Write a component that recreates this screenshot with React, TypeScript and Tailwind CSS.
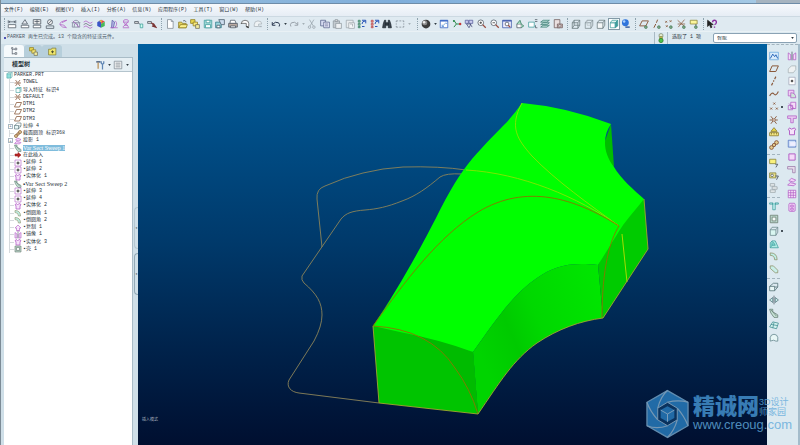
import React from "react";

/* A stroke of an icon on a 16-unit grid: path, stroke colour, fill colour, stroke width. */
type Shape = [d: string, stroke?: string, fill?: string, width?: number];

const INK = "#4c5561";
const TEAL = "#3f9c9c";
const PLUM = "#b05cc4";
const BROWN = "#8a5a3c";
const GOLD = "#e8d84e";

const dot = (x: number, y: number, r: number) =>
  `M${x - r} ${y}a${r} ${r} 0 1 0 ${2 * r} 0a${r} ${r} 0 1 0 ${-2 * r} 0`;

const cube = (line: string, face: string): Shape[] => [
  ["M2 6h9v9h-9z", line, face],
  ["M2 6l3-4h9l-3 4M14 2v8l-3 5", line, "none"],
];

const eye: Shape[] = [[dot(11, 13, 2.2), "#3d6b4c", "#7fae8a", 1]];

const icons: Record<string, Shape[]> = {
  distance: [["M2 2v5M14 2v5M3 4.500h10M5 3l-2 1.500l2 1.500M11 3l2 1.500l-2 1.500", INK], ["M2 9h12v5h-12z", INK, "#fff"]],
  angle: [["M8 1l-5 7h9z", INK, "#e4e8ee"], ["M2 10h12v4h-12z", INK, "#fff"]],
  area: [["M2 1h12v7h-12z", INK, "#eee"], ["M8 1v7M4 4h8", INK], ["M2 10h12v4h-12z", INK, "#fff"]],
  diameter: [[dot(8, 5, 4), INK, "#eee"], ["M5 8l6-6M2 11h12v4h-12z", INK]],
  curvature: [["M14 2q-12 2-11 7M14 2l-8 4M14 14q-8 0-11-5M12 13q-1-4-9-4", PLUM]],
  section: [["M2 13q0-11 6-11q6 0 6 11M5 13q0-7 3-7q3 0 3 7M2 13h12M1 6h14", "#7d7f9b"], ["M3 3l10 10", PLUM]],
  waves: [["M1 5q4-4 7 0t7 0", PLUM], ["M1 9q4-4 7 0t7 0", "#667"], ["M1 13q4-4 7 0t7 0", PLUM]],
  shade: [["M2 5l6-4v13l-6-3z", "none", "#3a55c8"], ["M8 1l6 3l-6 4z", "none", "#e0484a"], ["M8 8l6-4v7l-6 3z", "none", "#48b858"], ["M5 3l4-2v5z", "none", "#f0c83c"]],
  draft: [["M4 14l1-12l4 3l-2 9z", "#5a5ca8", "#b5b4e6"], ["M10 3q5 5-1 11M2 14h12", PLUM]],
  compare: [["M4 3q0-2 4-2t4 2t-4 5t-5 5M12 13q-1-3-5-5t-3-5M3 14h10M4 5h8M5 10h6", PLUM]],
  sensor: [["M1 4h6v3h-6zM7 6l4 4", INK, "#ddd"], ["M10 8h4v6h-4z", TEAL, "#cfe"]],
  probe: [["M1 4h6v3h-6z", INK, "#ddd"], ["M7 6l7 7M10 7l4 6l-6-2", "#7a3434", "none", 2]],
  newFile: [["M4 1h6l3 3v11h-9z", "#7d8791", "#fff"], ["M10 1v3h3", "#7d8791"]],
  open: [["M1 5h5l1 2h6v7h-12z", "#8a7a20", "#e6d25a"], ["M1 14l3-5h11l-2 5z", "#8a7a20", "#fbf08a"], ["M8 3q4-2 5 2", INK]],
  folders: [["M1 1h7v6h-7z", "#8c7b1e", GOLD], ["M5 5h7v6h-7z", "#8c7b1e", "#f7e878"], ["M9 9h6v6h-6z", "#6b6b55", "#f3ec9c"]],
  save: [["M2 2h12v12h-12z", TEAL, "#a6dcdc"], ["M5 2h6v4h-6zM4 9h8v5h-8z", TEAL, "#fff"]],
  saveCopy: [["M1 5h9v9h-9z", "#2c7a88", "#9ad4dc"], ["M6 1h9v8h-5z", "#456", "#cde"], ["M3 10h5v4h-5z", "#456", "#fff"]],
  print: [["M4 2h7l2 5h-10z", INK, "#fff"], ["M1 7h14v6h-14z", INK, "#b9a9a0"], ["M4 11h8v3h-8z", INK, "#eee"]],
  mail: [["M2 8q0-6 6-6t6 5v5h-4v-5h-8z", "#555", "#fff"], ["M10 12l4 2", "#333", "none", 2]],
  link: [["M2 9q0-6 6-6t6 5h-5v4h-7z", "#a9b3ba", "#eef2f4"], ["M10 12h4", "#a9b3ba", "none", 2]],
  undo: [["M2 5v5h5M2 9q5-6 10-3q3 3 1 6", "#2b3850", "none", 1.6]],
  redo: [["M14 5v5h-5M14 9q-5-6-10-3q-3 3-1 6", "#9aa3ab", "none", 1.6]],
  cut: [["M4 1l6 10M11 1l-6 10", "#97a1aa"], [dot(4, 13, 2), "#97a1aa"], [dot(11, 13, 2), "#97a1aa"]],
  copy: [["M1 2h8v9h-8z", "#55608a", "#d4daf0"], ["M6 5h9v9h-9z", "#55608a", "#eef"], ["M8 8h5M8 11h5", "#55608a"]],
  paste: [["M2 3h10v11h-10z", "#8e979e", "#c3cacf"], ["M6 7h9v8h-9z", "#8e979e", "#eef1f3"], ["M5 1h4v3h-4z", "#8e979e", "#ddd"]],
  pasteSpecial: [["M2 2h11v12h-11z", "#9ea6ac", "#e8ecee"], ["M6 6h9v9h-9zM8 8h4v4", "#9ea6ac", "#f5f7f8"]],
  regen: [["M2 2h3v3h-3zM2 7h3v3h-3zM2 12h3v2h-3z", "#347a5c", "#8ec9ac"], ["M8 2h6v5M14 3q-6 0-6 5M8 12h4", "#2d58b8", "none", 1.6]],
  regenAll: [["M2 2h3v3h-3zM2 7h3v3h-3zM2 12h3v2h-3z", "#b84848", "#ee9a9a"], ["M8 2h6v5M14 3q-6 0-6 5M8 12h4", "#2d58b8", "none", 1.6]],
  find: [["M2 8l2-6h2v12h-5zM14 8l-2-6h-2v12h5zM6 6h4v4h-4z", "#222b33", "#39434c"]],
  select: [["M2 3h3M7 3h3M12 3h2v2M14 7v2M14 11v2h-2M10 13h-3M5 13h-3v-2M2 9v-2M2 5v-2", "#7d8891"]],
  sphere: [[dot(8, 8, 7), "none", "#3c3c3c"], [dot(6, 6, 4), "none", "#8c8c8c"], [dot(5, 5, 2), "none", "#eee"]],
  repaint: [["M2 2h12v12h-12z", "#2b5cc0", "#fff"], ["M2 3h12", "#2b5cc0", "none", 2], ["M5 12l6-6l2 2M5 9v3h3", "#4a8ad0"]],
  spin: [["M3 2l4 6l-4 5M7 8h7", "#2c8a4c", "none", 1.6], [dot(13, 8, 2), "none", "#c43838"], [dot(3, 3, 1.6), "none", "#2c8a4c"]],
  layers: [["M2 2h5v5h-5zM8 2h6v5h-6z", "#5a5f9c", "#c9cbee"], ["M4 8h7l-3 6zM10 8l3 5", "#444a7a"]],
  zoomIn: [[dot(6, 6, 4.5), INK, "#fff"], ["M4 6h4M6 4v4", "#333"], ["M9 9l5 5", "#9a4a3c", "none", 2]],
  zoomOut: [[dot(6, 6, 4.5), INK, "#fff"], ["M4 6h4", "#333"], ["M9 9l5 5", "#9a4a3c", "none", 2]],
  fit: [["M1 2h14v12h-14z", "#3a55a8", "#eef"], ["M1 3h14", "#3a55a8", "none", 2], [dot(8, 8, 3), INK, "#fff"], ["M10 10l3 3", "#9a4a3c", "none", 2]],
  orient: [["M3 8h7v6h-7z", INK, "#fff"], ["M3 8l5-6l2 6M10 8l4 3l-4 3", "#2f7a5c", "#a8d8c0"]],
  views: [["M1 5h9v8h-9z", TEAL, "#fff"], ["M11 1h4M11 4h4M12 10v4h3", INK]],
  layerTree: [["M1 5l4-3h10l-4 3zM1 9l4-3h10l-4 3zM1 13l4-3h10l-4 3z", "#3c7c74", "#bfe3dd"]],
  viewManager: [["M2 1h9v13h-9z", "#6e5a5a", "#eadfdf"], ["M7 8h8v6h-8z", "#6e5a5a", "#d9c4c4"], [dot(11, 11, 2), "#6e5a5a", "#fff"]],
  wireframe: [...cube("#66757a", "none"), ["M5 2v8h9M5 10l-3 5", "#66757a"]],
  hidden: [...cube("#7d8b90", "none"), ["M5 3v7h8", "#b8c2c5"]],
  noHidden: cube("#66757a", "#f4f7f8"),
  shaded: [["M2 6h8v8h-8z", TEAL, "#fff"], ["M2 6l3-4h9l-4 4z", TEAL, "#dff4f0"], ["M14 2v9l-4 3v-8z", TEAL, "#3f9c9c"]],
  blueBall: [[dot(7, 6, 5.5), "none", "#2f74dc"], [dot(5, 4, 2), "none", "#a8d0ff"], ["M7 13h7", "#3c60a0", "none", 2.4]],
  plane: [["M5 3h10l-4 9h-10z", BROWN, "none", 1.6]],
  planeEye: [["M5 3h10l-4 8h-10z", BROWN, "none", 1.5], ...eye],
  axisEye: [["M9 1l-2 5M6 8l-3 6", BROWN, "none", 1.6], ...eye],
  pointEye: [["M2 3l3 3m0-3l-3 3M9 2l3 3m0-3l-3 3M3 10l3 3m0-3l-3 3", BROWN], ...eye],
  csysEye: [["M1 2l11 10M12 1l-10 12M1 8h12", BROWN], ...eye],
  noteEye: [["M2 2h11v6h-11z", "#8b8430", "#fbf59c"], ["M11 8v3", INK], ...eye],
  help: [["M1 2v10l3-3l2 5l2-1l-2-4h4z", "#222", "#222"], ["M9 5q0-3 3-3t3 3t-3 4M12 12v2", "#8a2fa0", "none", 2.2]],
  light: [["M5 3q0-2 3-2t3 2v3h-6z", "#7a8a70", "#e6ecd0"], ["M6 6h4v4h-4z", "#8c8c40", "#d8c850"], [dot(8, 12, 3.4), "#2d7a2d", "#4cc04c"]],
  sketch: [["M1 2h14v12h-14z", "#6aa6dc", "#d9ecfb"], ["M2 12l4-7l3 4l2-3l3 6", "#2a66b8", "none", 1.6]],
  axis: [["M11 1l-2 4M8 7l-1 2M6 11l-2 4", BROWN, "none", 1.8]],
  curve: [["M1 11q4-7 7-3t7-4", BROWN, "none", 1.8]],
  points: [["M7 1l3 3m0-3l-3 3M2 9l3 3m0-3l-3 3M11 9l3 3m0-3l-3 3", BROWN, "none", 1.5]],
  csys: [["M1 8h13M3 2l9 12M12 2l-9 12", BROWN, "none", 1.5], [dot(8, 8, 2), BROWN, "#fff"]],
  analysis: [["M8 1l5 6h-10z", "#857320", GOLD], ["M1 9h14v5h-14zM4 9v3M8 9v3M12 9v3", "#857320", "#f5eb8b"]],
  chain: [[dot(12, 4, 3), BROWN, "#e5cf90", 1.5], [dot(8, 8, 2.6), BROWN, "#e5cf90", 1.5], [dot(4, 12, 3), BROWN, "#e5cf90", 1.5]],
  note: [["M1 2h10v7h-10z", "#847f31", "#f9f17d"], ["M10 10h4l-3 5", INK, "none", 1.4]],
  noteSet: [["M1 3h10v8h-10z", "#847f31", "#e9df8b"], [dot(5, 7, 2), INK, "#fff"], ["M10 8h5l-3 6", INK, "none", 1.4]],
  noteOff: [["M2 1h7v4h-7zM5 6h8v4h-8zM2 11h8v4h-8z", "#9aa4a8", "#e5eaec"]],
  hole: [["M1 3h5v3M15 3h-5v3M6 3v11h4v-11M1 3v2h5M15 3v2h-5", TEAL, "#bfeeee"]],
  shell: [["M2 2h12v12h-12z", "#68796e", "#b9d6cb"], ["M5 5h6v6h-6z", "#68796e", "#f4faf8"]],
  rib: cube("#68858a", "#d9f6f1"),
  draftFace: [["M2 14v-8l3-3h5l5 11z", TEAL, "#b0ece6"], ["M5 3v7l-3 4M5 10h5l-3-5", TEAL, "#7fd6d0"]],
  round: [["M2 3q11 0 11 11h-4q0-7-7-7z", "#8b8f66", "#bfeee4"]],
  chamfer: [["M2 3h5l7 7v4h-4l-8-7z", "#8b8f66", "#c8eee8"]],
  extrude: [["M1 7h8v7h-8z", "#4d6c72", "#e8f6f6"], ["M7 2h7v6h-5M1 7l6-5M9 14l5-6", "#4d6c72"]],
  revolve: [["M8 1v14", INK], ["M6 4l-5 4l5 4zM10 4l5 4l-5 4z", "#507279", "#c9ece9"]],
  sweep: [["M1 2h5v4l8 5v4h-6l-5-7z", "#607a70", "#c7e3d6"], ["M3 3l9 10", "#607a70"]],
  blend: [["M1 11l5-8l9 2l-3 9zM3 7l11 2M8 4l-2 9", "#3f8c90", "#d4f2ef"]],
  style: [["M2 13v-6q1-5 6-5t6 5v6h-3q-3-3-9 0z", "#5e8088", "#e8f7f6"]],
  mirror: [["M2 3v11h4v-8zM14 3v11h-4v-8z", PLUM, "#f3dcf7"], ["M8 1v14", INK]],
  merge: [["M2 8l5-5h7v6l-4 5h-8z", "#a5b0b4", "#eef1f2"]],
  extend: [["M3 2h10v12h-10z", "#a0a6b8", "#fff"], ["M8 6v4M6 8h4", "#222", "none", 1.6]],
  extendTree: [["M2 2h12v12h-12z", PLUM, "#fff"], ["M8 5v6M5 8h6", "#222", "none", 1.8]],
  trim: [["M2 2h9v9h-9z", PLUM, "#efcff5"], ["M6 6q8 0 8 8h-8z", PLUM, "#cfe6d8"]],
  offset: [["M6 2h8v10h-8z", PLUM, "#f4dcf8"], ["M2 7h7v7h-7zM3 4l9 9", PLUM]],
  thicken: [["M1 3h14v4h-5v7h-4v-7h-5z", PLUM, "#e9c9f2"]],
  solidify: [["M2 6l2-3l3 2l5-2l2 3l-2 1v7h-8v-7z", PLUM, "#f6e3fa", 1.5]],
  fill: [["M2 2h12v11h-12z", "#4f72c0", "#cfdff8"], ["M5 5h9v6h-9z", "none", "#eef"]],
  pattern: [["M3 3h10v10h-10z", PLUM, "#f4d9f8", 1.5]],
  corner: [["M1 4h12v10h-4v-6h-8z", "#9b7aa8", "#e6dbea"]],
  project: [["M3 6l4-4l7 3l-4 3zM1 13l4-4l9 2l-3 3z", PLUM, "#f3d3f8"]],
  table: [["M2 2h12v12h-12zM2 6h12M2 10h12M6 2v12M10 2v12", PLUM, "#fae9fc"]],
  copySurface: [["M4 2h8l1 2v10l-2 1h-6l-2-1v-10z", PLUM, "#f3d3f8"], ["M6 5h4v3h-4zM6 10h4v3h-4z", PLUM]],
  duplicate: [["M2 8l6-6l6 6h-3v5h-6v-5zM5 14h7", PLUM, "#f8e6fb"]],
  part: [["M2 4h9v10h-9z", TEAL, "#8fe0dc"], ["M2 4l3-3h9v9l-3 4M11 4l3-3", TEAL, "none"]],
  importPart: [["M4 5h8v8h-8z", TEAL, "#f4fcfb"], ["M4 5l2-2h8v8l-2 2M12 5l2-2", TEAL, "none"]],
  insert: [["M2 6h6v-3l6 5l-6 5v-3h-6z", "#9c1f1f", "#b52424"]],
  tree: [["M4 1v12M4 4h5M4 12h5", INK], [dot(4, 2, 1.4), INK, "#fff"], ["M9 2h3v3h-3zM9 10h3v3h-3z", INK, "#fff"]],
  favorites: [["M1 4h5l1-2h7v12h-13z", "#7d762b", "#efe66d"], ["M8 6v5M5.500 8.500h5", "#4f5130", "none", 1.8]],
  tools: [["M2 3h7", "#4b6180", "none", 2.4], ["M5 4v10", "#b99058", "none", 2], ["M10 2v3l2 2l2-2v-3M12 7v8", "#5f86b4", "none", 2]],
  list: [["M2 2h12v12h-12z", "#7b8790", "#fff"], ["M4 5h8M4 8h8M4 11h8", "#65707a"]],
};

function Icon({ name, className = "size-[10px]" }: { name: string; className?: string }) {
  return (
    <svg viewBox="0 0 16 16" className={`${className} shrink-0`} aria-hidden="true">
      {icons[name].map(([d, stroke = "none", fill = "none", width = 1.2], i) => (
        <path key={i} d={d} stroke={stroke} fill={fill} strokeWidth={width} />
      ))}
    </svg>
  );
}

function Tool({ name, active = false }: { name: string; active?: boolean }) {
  return (
    <button
      type="button"
      aria-label={name}
      className={`flex size-[10px] shrink-0 items-center justify-center ${active ? "bg-white outline outline-1 outline-[#8299a6]" : ""}`}
    >
      <Icon name={name} />
    </button>
  );
}

function Caret({ faded = false }: { faded?: boolean }) {
  return (
    <span className="flex w-2 shrink-0 justify-center">
      <svg viewBox="0 0 4 3" className="h-[2px] w-[3px]" aria-hidden="true">
        <path d="M0 0h4l-2 3z" fill={faded ? "#a4afb6" : "#2f3a42"} />
      </svg>
    </span>
  );
}

function Grip() {
  return (
    <span className="flex h-full w-2 shrink-0 justify-center py-px">
      <span className="border-l border-dotted border-[#8ea2ad]" />
    </span>
  );
}

function ToolGroup({ names, width, active }: { names: string[]; width: string; active?: string }) {
  return (
    <div className={`flex shrink-0 justify-between ${width}`}>
      {names.map((n) => (
        <Tool key={n} name={n} active={n === active} />
      ))}
    </div>
  );
}

function ToolColumn({ names, height }: { names: string[]; height: string }) {
  return (
    <div className={`flex flex-col items-center justify-between ${height}`}>
      {names.map((n) =>
        n === "points" || n === "rib" ? (
          <div key={n} className="relative flex">
            <Tool name={n} />
            <span className="absolute top-1 left-3 size-[2px] bg-[#46525b]" />
          </div>
        ) : (
          <Tool key={n} name={n} />
        ),
      )}
    </div>
  );
}

function Divider() {
  return (
    <div className="flex h-2 items-center">
      <span className="w-full border-t border-dashed border-[#a3b4be]" />
    </div>
  );
}

const menus = ["文件(F)", "编辑(E)", "视图(V)", "插入(I)", "分析(A)", "信息(N)", "应用程序(P)", "工具(T)", "窗口(W)", "帮助(H)"];

const treeRows: { icon: string; label: string; expandable?: boolean; selected?: boolean; serif?: boolean }[] = [
  { icon: "csys", label: "TOWEL" },
  { icon: "importPart", label: "导入特征 标识4" },
  { icon: "csys", label: "DEFAULT" },
  { icon: "plane", label: "DTM1" },
  { icon: "plane", label: "DTM2" },
  { icon: "plane", label: "DTM3" },
  { icon: "extrude", label: "拉伸 4", expandable: true },
  { icon: "chain", label: "截面圆顶 标识368" },
  { icon: "project", label: "投影 1", expandable: true },
  { icon: "sweep", label: "Var Sect Sweep 1", selected: true, serif: true },
  { icon: "insert", label: "在此插入" },
  { icon: "extendTree", label: "▪延伸 1" },
  { icon: "extendTree", label: "▪延伸 2" },
  { icon: "solidify", label: "▪实体化 1" },
  { icon: "sweep", label: "▪Var Sect Sweep 2", serif: true },
  { icon: "extendTree", label: "▪延伸 3" },
  { icon: "extendTree", label: "▪延伸 4" },
  { icon: "solidify", label: "▪实体化 2" },
  { icon: "round", label: "▪倒圆角 1" },
  { icon: "round", label: "▪倒圆角 2" },
  { icon: "duplicate", label: "▪复制 1" },
  { icon: "mirror", label: "▪镜像 1" },
  { icon: "solidify", label: "▪实体化 3" },
  { icon: "shell", label: "▪壳 1" },
];

function ModelTree() {
  return (
    <ul className="grid h-[181px] auto-rows-fr">
      <li className="flex min-h-0 items-center gap-px pl-[2px] leading-none">
        <Icon name="part" className="size-[7px]" />
        PARKER.PRT
      </li>
      {treeRows.map((row, i) => (
        <li key={i} className="flex min-h-0 items-center pl-[2px] leading-none">
          <span className="flex h-full w-2 shrink-0 items-center justify-end">
            {row.expandable ? (
              <span className="mr-px flex size-[5px] items-center justify-center border border-[#a9b8c2] bg-white text-[4px] leading-none">+</span>
            ) : (
              <span className="flex h-full w-[5px] items-center border-l border-[#d6dadd]">
                <span className="w-full border-t border-[#d6dadd]" />
              </span>
            )}
          </span>
          <Icon name={row.icon} className="size-[8px]" />
          <span
            className={`ml-px whitespace-nowrap ${row.serif ? "font-['Liberation_Serif','Noto_Sans_CJK_SC',serif] text-[6px]" : ""} ${row.selected ? "bg-[#7fbcdc] text-white" : ""}`}
          >
            {row.label}
          </span>
        </li>
      ))}
    </ul>
  );
}

function SidePanel() {
  return (
    <aside className="flex w-[137px] shrink-0 bg-[#cfdfe8]">
      <div className="flex w-[132px] flex-col pt-px pl-[3px]">
        <div className="flex h-3 shrink-0 items-center">
          <button type="button" aria-label="模型树" className="flex h-full w-[20px] items-center justify-center rounded-t-[3px] bg-[#f6fafc]">
            <Icon name="tree" className="size-[9px]" />
          </button>
          <button type="button" aria-label="文件夹浏览器" className="flex h-full w-[18px] items-center justify-center rounded-t-[3px] bg-[#b7cfdb]">
            <Icon name="folders" className="size-[9px]" />
          </button>
          <button type="button" aria-label="收藏夹" className="flex h-full w-[20px] items-center justify-center rounded-t-[3px] bg-[#b7cfdb]">
            <Icon name="favorites" className="size-[9px]" />
          </button>
        </div>
        <div className="flex min-h-0 flex-1 flex-col border-t border-r border-[#a9bcc7] bg-[#e6eff4]">
          <header className="flex h-[13px] shrink-0 items-center pr-px pl-2">
            <h2 className="flex-1 text-[6px] leading-none font-bold">模型树</h2>
            <Tool name="tools" />
            <Caret />
            <Tool name="list" />
            <Caret />
          </header>
          <div className="min-h-0 flex-1 overflow-hidden border-t border-[#b4c4cd] bg-white">
            <ModelTree />
          </div>
        </div>
      </div>
      <div className="flex flex-1 flex-col gap-1 pt-[163px] pl-px">
        <span className="flex h-[42px] items-center rounded-l-sm border border-r-0 border-[#b4c7d1] text-[4px]">◂</span>
        <span className="flex h-[42px] items-center rounded-l-sm border border-r-0 border-[#93aab7] text-[4px]">◂</span>
      </div>
    </aside>
  );
}

function Model() {
  return (
    <svg viewBox="138 44 629 401" className="h-full w-full" role="img" aria-label="PARKER">
      <defs>
        <linearGradient id="side" x1="0" x2="1" y1="0.500" y2="0">
          <stop offset="0" stopColor="#00d400" />
          <stop offset="0.250" stopColor="#00ca00" />
          <stop offset="0.450" stopColor="#00d800" />
          <stop offset="1" stopColor="#00e800" />
        </linearGradient>
      </defs>
      <g fill="none" stroke="#8b8359" strokeWidth="0.9">
        <path d="M322 247L317 199Q316 189 325 186Q345 177 363 173Q383 168 403 167Q440 166 466 170" />
        <path d="M462 174Q446 173 440 177C427 188 416 196 402 201C387 207 377 209 365 210C352 211 346 213 341 219L302 276Q301 280 304 283C317 294 322 303 322 315Q322 326 314 341L289 380C286 387 291 392 299 393L379 403" />
      </g>
      <path d="M611 124L614 167L600 155Z" fill="#00bd00" />
      <path d="M644 199L648 249L603 318L598 265L622 215Z" fill="#00cb00" />
      <path d="M373 326L379 403L478 414L473 352L427 330Z" fill="#00c400" />
      <path d="M373 326Q430 329 455 368Q470 388 478 414L473 352L430 336Z" fill="#00bb00" />
      <path d="M473 352C496 320 512 295 537 278C554 266 570 262 598 265L603 318C580 321 558 329 537 343C513 360 500 382 478 414Z" fill="url(#side)" />
      <path d="M522 103Q567 107 611 124C603 135 602 152 614 167C621 179 634 190 644 199C633 213 625 221 618 233L598 265C570 262 554 266 537 278C512 295 496 320 473 352Q441 340 400 332L373 326C397 291 420 249 436 218C449 191 461 172 472 159C485 144 498 131 507 122Q515 113 522 103Z" fill="#00ff00" />
      <g fill="none" strokeWidth="0.9">
        <path d="M522 103C509 127 517 139 532 156C555 180 590 205 619 226" stroke="#86e500" />
        <path d="M466 170C521 173 578 197 619 226" stroke="#86e500" />
        <path d="M373 326C405 281 439 236 478 212C526 183 575 198 619 226C610 240 602 268 602 318" stroke="#8b7300" />
        <path d="M373 326Q430 329 455 368Q470 388 478 414" stroke="#8b7600" />
        <path d="M622 234L627 282" stroke="#b8de00" />
        <path d="M373 326L379 403L478 414C500 382 513 360 537 343C558 329 580 321 603 318L648 249L644 199" stroke="#a1a52f" />
      </g>
    </svg>
  );
}

function Watermark() {
  return (
    <div className="pointer-events-none absolute right-2 bottom-[6px] flex items-center gap-1 font-['Liberation_Sans','Noto_Sans_CJK_SC',sans-serif] text-[#62abdc] opacity-80">
      <svg viewBox="0 0 44 50" className="h-[50px] w-[43px]" aria-hidden="true">
        <path d="M22 1L43 13V37L22 49L1 37V13Z" fill="#2a80c2" stroke="#79a9cc" strokeWidth="1.4" />
        <path d="M22 13L32 19V31L22 37L12 31V19Z" fill="#0d3a68" stroke="#93b8d3" />
        <path d="M22 17L29 21V29L22 33L15 29V21Z" fill="#2a80c2" />
        <path d="M15 21L22 25L29 21M22 25V33" fill="none" stroke="#9cc2dc" />
        <path d="M22 13Q33 10 43 13M32 19Q39 27 43 37M32 31Q29 42 22 49M22 37Q11 41 1 37M12 31Q4 22 1 13M12 19Q15 7 22 1" fill="none" stroke="#93b8d3" strokeWidth="1.200" />
      </svg>
      <div>
        <div className="flex items-center">
          <span className="text-[22px] leading-[22px] font-black whitespace-nowrap text-[#4696d3]">精诚网</span>
          <span className="text-[9px] leading-[10px] whitespace-nowrap">
            3D设计
            <br />
            师家园
          </span>
        </div>
        <div className="text-[13px] leading-[14px]">www.creoug.com</div>
      </div>
    </div>
  );
}

export default function App() {
  return (
    <div className="relative flex h-screen flex-col overflow-hidden border-l border-[#7c8b96] bg-[#dce9f0] font-['Liberation_Mono','Noto_Sans_CJK_SC',monospace] text-[5px] text-[#27323a]">
      <div className="flex h-1 shrink-0 justify-end border-b border-[#6e8ca8] bg-linear-to-r from-[#a3c4dc] via-[#7faedb] to-[#a9cce6]">
        <span className="w-[44px] bg-[#a7b4c0]" />
      </div>
      <nav className="flex h-3 shrink-0 items-center bg-linear-to-b from-[#f7f9fc] to-[#e6edf5] pl-[3px]">
        <div className="flex w-[260px] justify-between">
          {menus.map((m) => (
            <button key={m} type="button" className="leading-none whitespace-nowrap">
              {m}
            </button>
          ))}
        </div>
      </nav>
      <div className="flex h-[15px] shrink-0 items-center border-t border-[#ccd9e2] bg-[#dfeaf1]">
        <div className="flex h-full items-center">
          <span className="flex h-full w-[6px] justify-center py-px">
            <span className="border-l border-dotted border-[#8ea2ad]" />
          </span>
          <ToolGroup width="w-[150px]" names={["distance", "angle", "area", "diameter", "curvature", "section", "waves", "shade", "draft", "compare", "sensor", "probe"]} />
          <Grip />
          <ToolGroup width="w-[98px]" names={["newFile", "open", "folders", "save", "saveCopy", "print", "mail", "link"]} />
          <Grip />
          <Tool name="undo" />
          <Caret />
          <Tool name="redo" />
          <Caret faded />
          <ToolGroup width="w-[98px]" names={["cut", "copy", "paste", "pasteSpecial", "regen", "regenAll", "find", "select"]} />
          <Caret faded />
          <Grip />
          <Tool name="sphere" />
          <Caret />
          <ToolGroup width="w-[124px]" names={["repaint", "spin", "layers", "zoomIn", "zoomOut", "fit", "orient", "views", "layerTree", "viewManager"]} />
          <Grip />
          <ToolGroup width="w-[60px]" active="shaded" names={["wireframe", "hidden", "noHidden", "shaded", "blueBall"]} />
          <Grip />
          <ToolGroup width="w-[60px]" names={["planeEye", "axisEye", "pointEye", "csysEye", "noteEye"]} />
          <Grip />
          <Tool name="help" />
        </div>
      </div>
      <div className="flex h-[13px] shrink-0 items-center border-t border-[#e9f1f5] pr-[3px] pl-[3px]">
        <p className="flex flex-1 items-center gap-px text-[#4c5a68]">
          <span className="size-[2px] rounded-full bg-[#2020a0]" />
          PARKER 再生已完成。13 个隐含的特征或元件。
        </p>
        <div className="flex h-full items-center gap-1">
          <span className="flex h-full items-center border-x border-[#a9bac4] px-px">
            <Icon name="light" />
          </span>
          <label htmlFor="filter" className="mr-2">
            选取了 1 项
          </label>
          <div className="relative flex w-[84px] items-center">
            <select id="filter" className="h-[10px] w-full appearance-none rounded-[2px] border border-[#8aa2b4] bg-white pl-[3px] leading-none">
              <option>智能</option>
            </select>
            <span className="pointer-events-none absolute right-px">
              <Caret />
            </span>
          </div>
        </div>
      </div>
      <div className="flex min-h-0 flex-1">
        <SidePanel />
        <main className="relative min-w-0 flex-1 bg-linear-to-b from-[#005f9f] via-[#00396a] to-[#000f30]">
          <Model />
          <span className="absolute bottom-[23px] left-[4px] text-[4px] leading-none text-[#a9b2be]">插入模式</span>
        </main>
        <aside className="flex w-[33px] shrink-0 border-r-2 border-[#a4bccb] bg-[#dce9f0]">
          <div className="min-w-0 flex-1">
            <div className="h-[7px] border-t border-dashed border-[#a3b4be]" />
            <div className="flex">
              <div className="w-[13px]">
                <ToolColumn height="h-[99px]" names={["sketch", "plane", "axis", "curve", "points", "csys", "analysis", "chain"]} />
                <Divider />
                <ToolColumn height="h-[35px]" names={["note", "noteSet", "noteOff"]} />
                <Divider />
                <ToolColumn height="h-[73px]" names={["hole", "shell", "rib", "draftFace", "round", "chamfer"]} />
                <Divider />
                <ToolColumn height="h-[61px]" names={["extrude", "revolve", "sweep", "blend", "style"]} />
              </div>
              <div className="ml-auto w-[13px]">
                <ToolColumn height="h-[161px]" names={["mirror", "merge", "extend", "trim", "offset", "thicken", "solidify", "fill", "pattern", "corner", "project", "table", "copySurface"]} />
              </div>
            </div>
          </div>
        </aside>
      </div>
      <Watermark />
    </div>
  );
}
